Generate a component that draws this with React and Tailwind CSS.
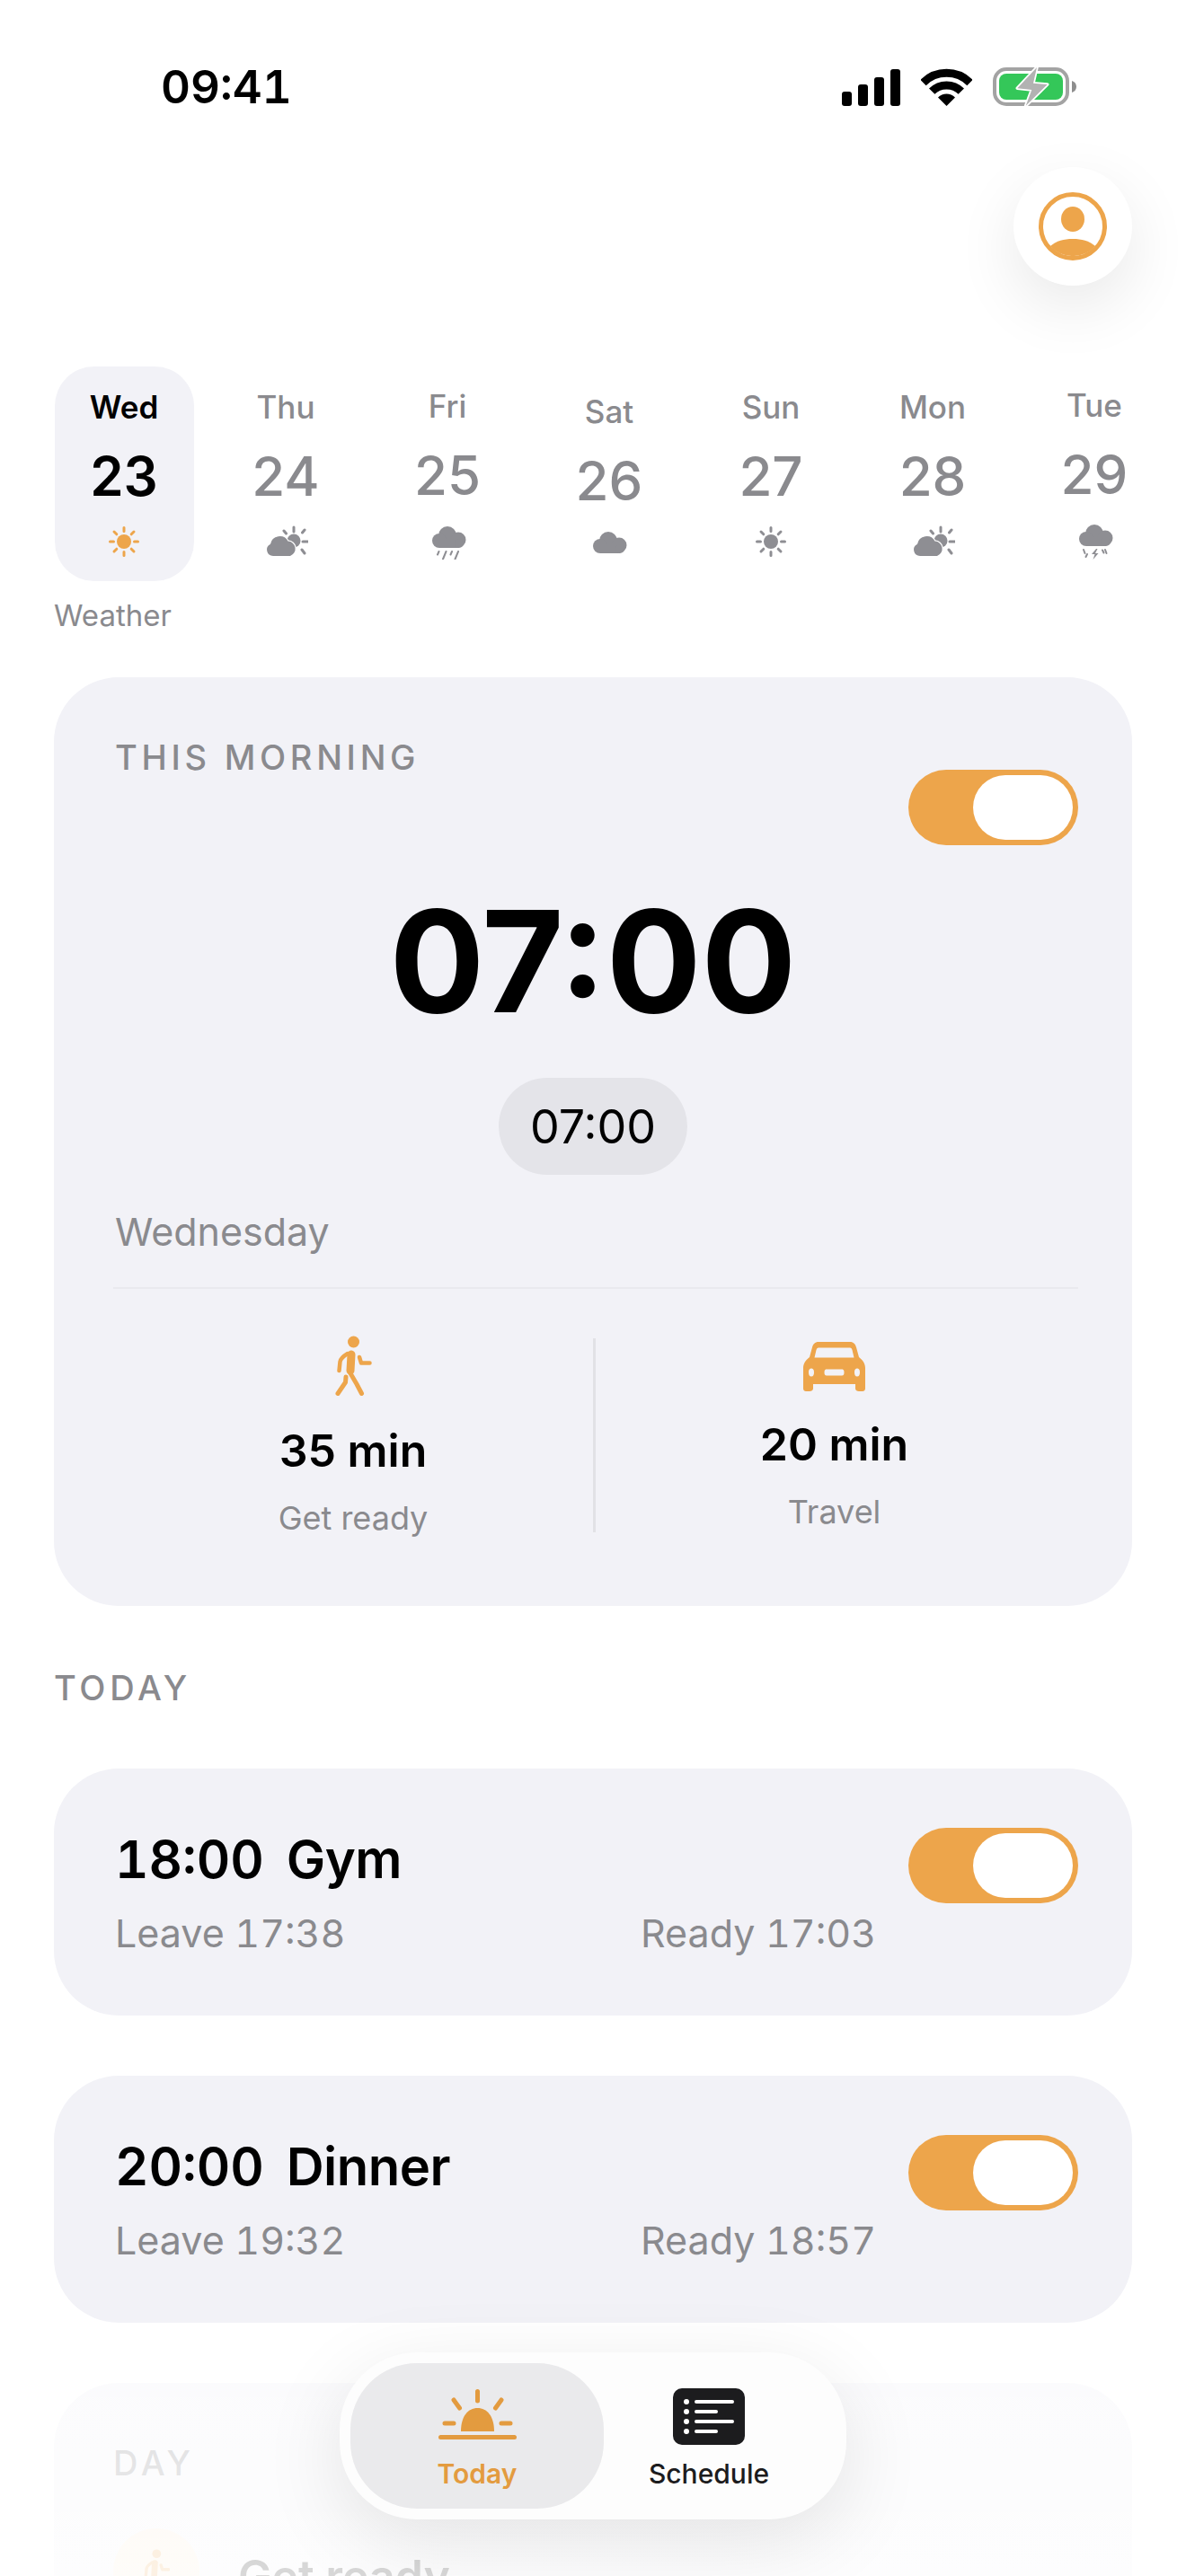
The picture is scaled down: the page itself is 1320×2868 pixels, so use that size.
import React from 'react';

const days = [
  { label: 'Wed', date: '23', icon: 'sunActive', active: true, pad: 'pt-[24px]', iconGap: 'mt-[21px]' },
  { label: 'Thu', date: '24', icon: 'cloudSun', pad: 'pt-[24px]', iconGap: 'mt-[21px]' },
  { label: 'Fri', date: '25', icon: 'rain', pad: 'pt-[23px]', iconGap: 'mt-[22px]' },
  { label: 'Sat', date: '26', icon: 'cloud', pad: 'pt-[29px]', iconGap: 'mt-[16px]' },
  { label: 'Sun', date: '27', icon: 'sun', pad: 'pt-[24px]', iconGap: 'mt-[21px]' },
  { label: 'Mon', date: '28', icon: 'cloudSun', pad: 'pt-[24px]', iconGap: 'mt-[21px]' },
  { label: 'Tue', date: '29', icon: 'storm', pad: 'pt-[22px]', iconGap: 'mt-[23px]' },
];

function Signal() {
  return (
    <svg width="65" height="41" viewBox="0 0 65 41" fill="#000">
      <rect x="0" y="25" width="11" height="16" rx="3" />
      <rect x="18" y="17" width="11" height="24" rx="3" />
      <rect x="36" y="9" width="11" height="32" rx="3" />
      <rect x="54" y="0" width="11" height="41" rx="3" />
    </svg>
  );
}

function Wifi() {
  return (
    <svg width="57" height="42" viewBox="0 0 57 42" fill="none">
      <path d="M2.5 16A37 37 0 0 1 54.5 16" stroke="#000" strokeWidth="9" />
      <path d="M12.2 25.7A23 23 0 0 1 44.8 25.7" stroke="#000" strokeWidth="9" />
      <path d="M19 32.5A13.5 13.5 0 0 1 38 32.5L28.5 42Z" fill="#000" />
    </svg>
  );
}

function Battery() {
  return (
    <svg width="93" height="46" viewBox="0 0 93 46" fill="none">
      <rect x="2" y="3" width="81" height="39" rx="13" stroke="#A3A3A3" strokeWidth="4" />
      <rect x="7" y="8" width="71" height="29" rx="8" fill="#34C759" />
      <path d="M88 16C91 17 93 19 93 22.500S91 28 88 29Z" fill="#8E8E8E" />
      <path d="M49 1L27.300 24.300L43.300 26L36.700 43.700L60.700 20L45 18.700Z" fill="#B2B2B2" stroke="#fff" strokeWidth="3.500" strokeLinejoin="round" paintOrder="stroke" />
    </svg>
  );
}

function Profile() {
  return (
    <svg width="76" height="76" viewBox="0 0 76 76" fill="#EDA54B">
      <circle cx="38" cy="38" r="35.500" fill="none" stroke="#EDA54B" strokeWidth="5" />
      <ellipse cx="38" cy="30" rx="13" ry="14" />
      <path d="M13 60C20 54 28 52 38 52C48 52 56 54 63 60A33.400 33.400 0 0 1 13 60Z" />
    </svg>
  );
}

// Weather glyphs share a 46x40 box so they line up on the same row
function SunGlyph({ color }) {
  return (
    <svg width="46" height="40" viewBox="0 0 46 40" fill={color} stroke={color}>
      <circle cx="23" cy="20" r="8" stroke="none" />
      <g strokeWidth="3" strokeLinecap="round">
        <path d="M23 4.500V8.500M23 31.500V35.500M7.500 20H11.500M34.500 20H38.500M12 9L14.800 11.800M31.200 28.200L34 31M12 31L14.800 28.200M31.200 11.800L34 9" />
      </g>
    </svg>
  );
}

function CloudShape({ x = 0, y = 0 }) {
  return (
    <g transform={`translate(${x} ${y})`}>
      <circle cx="17" cy="10" r="10" />
      <circle cx="8" cy="16" r="8" />
      <circle cx="29" cy="15" r="8.500" />
      <rect x="8" y="14" width="22" height="10" />
      <circle cx="30" cy="19" r="5" />
    </g>
  );
}

function CloudSun() {
  return (
    <svg width="50" height="40" viewBox="-2 0 50 40" fill="#8E8E93">
      <circle cx="32" cy="19" r="7.500" />
      <path d="M32 4V9M21 8L23.500 11M44 7L41.500 10M42 20H47.500M41 29L44 33" stroke="#8E8E93" strokeWidth="3" strokeLinecap="round" fill="none" />
      <path d="M9 36A7 7 0 0 1 6 22.700A10.500 10.500 0 0 1 25.500 19.500A8.500 8.500 0 0 1 28 36Z" stroke="#fff" strokeWidth="2.500" paintOrder="stroke" />
    </svg>
  );
}

function Cloud() {
  return (
    <svg width="46" height="40" viewBox="0 0 46 40" fill="#8E8E93">
      <CloudShape x="5" y="9" />
    </svg>
  );
}

function Rain() {
  return (
    <svg width="46" height="40" viewBox="0 0 46 40" fill="#8E8E93">
      <CloudShape x="6" y="3" />
      <path d="M13.500 31L12 34.500M21.500 31L18 39.500M28 31L26.500 34.500M35 31L31.500 39.500" stroke="#8E8E93" strokeWidth="2" strokeLinecap="round" fill="none" />
    </svg>
  );
}

function Storm() {
  return (
    <svg width="46" height="40" viewBox="0 0 46 40" fill="#8E8E93">
      <CloudShape x="6" y="1" />
      <path d="M11 29L12.500 33M15 34L13.500 37M35 29L36.500 33M32 29.500L33.500 32.500" stroke="#8E8E93" strokeWidth="2" strokeLinecap="round" fill="none" />
      <path d="M25 28L20 34H23.500L21.500 40L27.500 33H24L26.500 28Z" />
    </svg>
  );
}

function WeatherIcon({ name }) {
  if (name === 'sunActive') return <SunGlyph color="#EDA54B" />;
  if (name === 'sun') return <SunGlyph color="#8E8E93" />;
  if (name === 'cloudSun') return <CloudSun />;
  if (name === 'rain') return <Rain />;
  if (name === 'cloud') return <Cloud />;
  return <Storm />;
}

function Walk({ size = 67 }) {
  return (
    <svg width={(size * 41) / 67} height={size} viewBox="0 0 41 67" fill="none" stroke="#EDA54B" strokeLinecap="round" strokeLinejoin="round">
      <ellipse cx="20.500" cy="7" rx="6.500" ry="6.500" fill="#EDA54B" stroke="none" />
      <path d="M18 21L17 39" strokeWidth="9" />
      <path d="M14 20C9 23 6 26 5.500 29L4.500 39" strokeWidth="4.500" />
      <path d="M27 24L29 30.500H38.500" strokeWidth="4.500" />
      <path d="M17 42L24 54L29.500 64.500" strokeWidth="5" />
      <path d="M12 46L11.500 52L3 64.500" strokeWidth="5" />
    </svg>
  );
}

function Car() {
  return (
    <svg width="69" height="55" viewBox="0 0 69 55" fill="#EDA54B">
      <path
        fillRule="evenodd"
        d="M17 0H52C56 0 58 2.500 59 6L62 17C66 20 69 24 69 29V52C69 54 67.500 55 66 55H62C60 55 58 54 58 52V47H11V52C11 54 9 55 7 55H3C1.500 55 0 54 0 52V29C0 24 3 20 7 17L10 6C11 2.500 13 0 17 0ZM17 6.500C15.500 6.500 15 7.500 14.500 9L12.500 17.500H56.500L54.500 9C54 7.500 53.500 6.500 52 6.500ZM9 29.500C6.800 29.500 6 31.500 6 34C6 36.500 6.800 38.500 9 38.500C11.200 38.500 12 36.500 12 34C12 31.500 11.200 29.500 9 29.500ZM60 29.500C57.800 29.500 57 31.500 57 34C57 36.500 57.800 38.500 60 38.500C62.200 38.500 63 36.500 63 34C63 31.500 62.200 29.500 60 29.500ZM26 30.500C24 30.500 23.500 32 23.500 34C23.500 36 24 37.500 26 37.500H43C45 37.500 45.500 36 45.500 34C45.500 32 45 30.500 43 30.500Z"
      />
    </svg>
  );
}

function Sunrise() {
  return (
    <svg width="87" height="56" viewBox="0 0 87 56" fill="#E39B3F" stroke="#E39B3F">
      <path d="M25 47C25 30 33 21 43.500 21C54 21 62 30 62 47Z" stroke="none" />
      <path d="M43.500 2.500V13M17 12L23.500 21M70 12L63.500 21M7 38H17M70 38H80" strokeWidth="5" strokeLinecap="round" fill="none" />
      <rect x="0" y="51" width="87" height="5" rx="2.500" stroke="none" />
    </svg>
  );
}

function ScheduleIcon() {
  return (
    <svg width="80" height="63" viewBox="0 0 80 63">
      <rect width="80" height="63" rx="10" fill="#1C1C1E" />
      <g fill="#fff">
        <circle cx="15" cy="15" r="3" />
        <circle cx="15" cy="26" r="3" />
        <circle cx="15" cy="37" r="3" />
        <circle cx="15" cy="48" r="3" />
        <rect x="24" y="13" width="44" height="4" rx="2" />
        <rect x="24" y="24" width="26" height="4" rx="2" />
        <rect x="24" y="35" width="44" height="4" rx="2" />
        <rect x="24" y="46" width="26" height="4" rx="2" />
      </g>
    </svg>
  );
}

function Toggle() {
  return (
    <div className="w-[189px] h-[84px] shrink-0 rounded-full bg-[#EDA54B] flex items-center justify-end pr-[6px]">
      <div className="w-[111px] h-[72px] rounded-full bg-white" />
    </div>
  );
}

function SectionLabel({ children }) {
  return <div className="h-[46px] text-[38px] leading-[46px] font-medium tracking-[4.7px] text-[#8A8A8E]">{children}</div>;
}

function EventCard({ time, name, leave, ready }) {
  return (
    <div className="mx-[60px] mt-[67px] h-[275px] rounded-[72px] bg-[#F2F2F7] flex justify-between pl-[68px] pr-[60px]">
      <div className="pt-[65px]">
        <div className="flex gap-[25px] h-[72px] items-center text-[58px] leading-[72px] font-semibold text-black tabular-nums">
          <span>{time}</span>
          <span className="tracking-[-0.5px]">{name}</span>
        </div>
        <div className="mt-[16px] flex h-[60px] items-center text-[43px] leading-[60px] text-[#8A8A8E] tabular-nums">
          <span className="w-[585px]">{leave}</span>
          <span>{ready}</span>
        </div>
      </div>
      <div className="pt-[66px]">
        <Toggle />
      </div>
    </div>
  );
}

export default function App() {
  return (
    <div className="relative w-[1320px] h-[2868px] overflow-hidden bg-white [font-family:Inter,sans-serif]">
      {/* Status bar */}
      <div className="pt-[74px] h-[120px] flex items-center justify-between pl-[179px] pr-[122px]">
        <span className="text-[51px] leading-[46px] font-semibold text-black tabular-nums">09:41</span>
        <div className="flex items-center gap-[23px]">
          <Signal />
          <Wifi />
          <Battery />
        </div>
      </div>

      {/* Profile button */}
      <div className="mt-[66px] flex justify-end pr-[60px]">
        <div className="w-[132px] h-[132px] rounded-full bg-white flex items-center justify-center shadow-[0_24px_70px_rgba(0,0,0,0.09)]">
          <Profile />
        </div>
      </div>

      {/* Week strip */}
      <div className="mt-[90px] pl-[48px] pr-[12px] grid grid-cols-7">
        {days.map((d) => (
          <div key={d.date} className="h-[239px] flex justify-center">
            <div className={`w-[155px] rounded-[44px] flex flex-col items-center ${d.pad} ${d.active ? 'bg-[#F2F2F7]' : ''}`}>
              <div className={`h-[42px] text-[35px] leading-[42px] ${d.active ? 'font-semibold text-black' : 'font-medium text-[#8A8A8E]'}`}>{d.label}</div>
              <div className={`mt-[24px] h-[64px] text-[60px] leading-[64px] ${d.active ? 'font-semibold text-black' : 'font-medium text-[#8A8A8E]'}`}>{d.date}</div>
              <div className={d.iconGap}>
                <WeatherIcon name={d.icon} />
              </div>
            </div>
          </div>
        ))}
      </div>
      <div className="mt-[18px] pl-[60px] h-[40px] text-[33px] leading-[40px] text-[#8A8A8E]">Weather</div>

      {/* Alarm card */}
      <div className="mx-[60px] mt-[49px] h-[1034px] rounded-[72px] bg-[#F2F2F7] pt-[66px]">
        <div className="flex justify-between pl-[68px] pr-[60px]">
          <SectionLabel>THIS MORNING</SectionLabel>
          <div className="mt-[37px]">
            <Toggle />
          </div>
        </div>
        <div className="mt-[49px] text-center text-[157px] leading-[160px] font-bold text-black">07:00</div>
        <div className="mt-[50px] flex justify-center">
          <div className="w-[210px] h-[108px] pt-[2px] rounded-full bg-[#E4E4E9] flex items-center justify-center text-[52px] text-black">07:00</div>
        </div>
        <div className="mt-[33px] pl-[68px] h-[60px] text-[43px] leading-[60px] text-[#8A8A8E]">Wednesday</div>
        <div className="mt-[32px] ml-[66px] mr-[60px] h-[2px] bg-[#E9E9EE]" />
        <div className="mt-[55px] ml-[66px] flex items-start">
          <div className="w-[534px] flex flex-col items-center -mt-[3px]">
            <Walk />
            <div className="mt-[31px] h-[60px] text-[50px] leading-[60px] font-semibold text-black">35 min</div>
            <div className="mt-[20px] h-[50px] text-[36px] leading-[50px] text-[#8A8A8E]">Get ready</div>
          </div>
          <div className="w-[3px] h-[216px] bg-[#E2E2E6]" />
          <div className="w-[531px] flex flex-col items-center pt-[4px]">
            <Car />
            <div className="mt-[29px] h-[60px] text-[50px] leading-[60px] font-semibold text-black">20 min</div>
            <div className="mt-[20px] h-[50px] text-[36px] leading-[50px] text-[#8A8A8E]">Travel</div>
          </div>
        </div>
      </div>

      {/* Today list */}
      <div className="mt-[68px] pl-[60px]">
        <SectionLabel>TODAY</SectionLabel>
      </div>
      <EventCard time="18:00" name="Gym" leave="Leave 17:38" ready="Ready 17:03" />
      <EventCard time="20:00" name="Dinner" leave="Leave 19:32" ready="Ready 18:57" />

      {/* Day plan, mostly hidden under the fade */}
      <div className="mx-[60px] mt-[67px] h-[400px] rounded-[72px] bg-[#F2F2F7] pt-[66px] pl-[66px]">
        <SectionLabel>DAY</SectionLabel>
        <div className="mt-[50px] flex items-center gap-[43px]">
          <div className="w-[96px] h-[96px] rounded-full bg-[#FBEBD6] flex items-center justify-center">
            <Walk size={50} />
          </div>
          <div className="mt-[10px] text-[50px] leading-[60px] font-semibold text-black">Get ready</div>
        </div>
      </div>

      {/* Tab bar over a white fade */}
      <div className="absolute left-0 right-0 bottom-0 h-[250px] bg-gradient-to-b from-white/70 to-white/85 flex justify-center pt-[1px]">
        <div className="w-[564px] h-[186px] rounded-[86px] bg-[#FDFDFD] p-[12px] flex shadow-[0_24px_90px_rgba(0,0,0,0.1)]">
          <div className="w-[282px] h-[162px] rounded-[74px] bg-[#EAEAEC] flex flex-col items-center pt-[29px]">
            <Sunrise />
            <div className="mt-[18px] h-[40px] text-[30px] leading-[40px] font-semibold text-[#E39B3F]">Today</div>
          </div>
          <div className="w-[234px] flex flex-col items-center pt-[28px]">
            <ScheduleIcon />
            <div className="mt-[12px] h-[40px] text-[30px] leading-[40px] font-medium text-[#1C1C1E]">Schedule</div>
          </div>
        </div>
      </div>
    </div>
  );
}
